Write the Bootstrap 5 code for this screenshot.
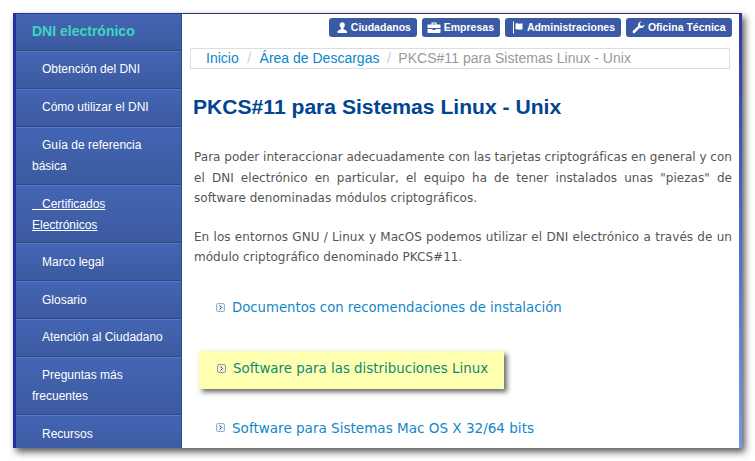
<!DOCTYPE html>
<html lang="es"><head><meta charset="utf-8">
<link href="https://cdn.jsdelivr.net/npm/bootstrap@5.3.0/dist/css/bootstrap.min.css" rel="stylesheet">
<style>
html,body{height:461px;overflow:hidden;background:#fff}
body{font-family:"Liberation Sans",Arial,sans-serif}
.frame{margin:13px 0 0 13px;width:729px;height:435px;background:#fff;box-shadow:3px 4px 7px rgba(0,0,0,.65);border-top:1px solid #2a3580;overflow:hidden}
.edge{width:3px;background:#2131a0;flex:none}
.edge-r{width:3px;background:linear-gradient(#2d3b9e,#6f9bea);flex:none}
.side{width:166px;flex:none;border-right:1px solid #2f4c8f;overflow:hidden;background:#3f5fa8}
.side a{display:block;color:#fff;font-size:12px;line-height:21px;text-decoration:none;padding:7px 5px 8px 16px;text-indent:10px;background:linear-gradient(#4465b4,#3b5a9f);border-top:1px solid #5a78bd;border-bottom:1px solid #2e4a86}
.side a.two{padding-bottom:7px}
.side a.head{color:#3fd6c0;font-weight:700;font-size:14px;text-indent:0;padding:7px 5px 0 16px;height:37px;border-top:0}
.side a.u{text-decoration:underline;text-indent:0;padding-top:8px;padding-bottom:6px}
.side a.drop{padding-top:8px;padding-bottom:7px}
.main{min-width:0;flex:1 1 auto;padding:4px 7px 0 8px}
.tops{gap:4.400px;justify-content:flex-end}
.tbtn{display:inline-flex;align-items:center;gap:3px;height:19px;padding:0 6.500px 0 5px;background:#3b5aa5;color:#fff;font-size:10.500px;font-weight:700;border-radius:3px;white-space:nowrap;line-height:1;text-decoration:none}
.crumbs{margin:11px 2.500px 0 0;height:21px;border:1px solid #ddd;padding:0 0 0 15px;font-size:14px;color:#999;line-height:19px;white-space:nowrap}
.crumbs a{color:#0b86c8;text-decoration:none}
.crumbs i{font-style:normal;color:#ccc;margin:0 8.500px}
.crumbs i.near{margin:0 7.500px}
.crumbs span{letter-spacing:.03px}
.ttl{font-size:21.100px;line-height:24px;font-weight:700;color:#004494;margin:26px 0 0 3px}
.para{font-family:"DejaVu Sans",sans-serif;font-size:12px;letter-spacing:.04px;line-height:20.500px;color:#555;text-align:justify;margin:0 0 0 4px}
.jl{display:block;text-align-last:justify}
.tight{word-spacing:-.5px}
.p1{margin-top:28px}
.p2{margin-top:18px}
.linkrow{font-family:"DejaVu Sans",sans-serif;color:#1287c7;display:flex;align-items:center;gap:7px;text-decoration:none;line-height:20px;white-space:nowrap}
.l1{margin:30px 0 0 26px;font-size:13.250px}
.l2{margin:33px 0 0 9px;width:305px;height:38px;padding:0 0 2px 18px;font-size:13.400px}
.l3{margin:29px 0 0 26px;font-size:13.550px}
.hot{background:#ffffb0;color:#0b8a78;box-shadow:3px 3px 5px rgba(0,0,0,.6)}
</style></head>
<body>
<div class="frame d-flex">
<div class="edge"></div>
<nav class="side">
<a class="head" href="#">DNI electrónico</a>
<a href="#">Obtención del DNI</a>
<a href="#">Cómo utilizar el DNI</a>
<a class="two" href="#">Guía de referencia básica</a>
<a class="two u" href="#">&nbsp;&nbsp;&nbsp;Certificados<br>Electrónicos</a>
<a class="drop" href="#">Marco legal</a>
<a class="drop" href="#">Glosario</a>
<a href="#">Atención al Ciudadano</a>
<a class="two" href="#">Preguntas más frecuentes</a>
<a class="drop" href="#">Recursos</a>
</nav>
<main class="main">
<div class="d-flex tops">
<a class="tbtn" href="#"><svg width="14" height="13" viewBox="0 0 14 13" fill="#fff"><path d="M8.500 1.200c1.300 0 2.300 1 2.300 2.700 0 1.300-.6 2.400-1.300 3.100v1.300c1.600.6 3.200 1.300 3.500 2.200v1.500H3.500V10.500c.3-.9 1.900-1.600 3.500-2.200V7c-.7-.7-1.300-1.800-1.300-3.100 0-1.700 1-2.700 2.800-2.700z"/></svg>Ciudadanos</a>
<a class="tbtn" href="#"><svg width="14" height="13" viewBox="0 0 14 13" fill="#fff"><path d="M4.500 1.500h5V3.500h3c.6 0 1 .4 1 1V7h-13V4.500c0-.6.4-1 1-1h3zM5.700 2.500v1h2.600v-1zM.5 8h5v1h3V8h5v3c0 .6-.4 1-1 1h-11c-.6 0-1-.4-1-1z"/></svg>Empresas</a>
<a class="tbtn" href="#"><svg width="14" height="13" viewBox="0 0 14 13" fill="#fff"><path d="M3 .5h1v12H3zM5.500 2.500c2-.8 3.500.9 7-.2v6c-3.500 1.100-5-.6-7 .2z"/></svg>Administraciones</a>
<a class="tbtn" href="#"><svg width="14" height="13" viewBox="0 0 14 13" fill="#fff"><path d="M13.500 3.500a3.500 3.500 0 0 1-4.700 3.300L4 11.800a1.400 1.400 0 0 1-2-2l5.200-4.800A3.500 3.500 0 0 1 10.500.5L8.800 2.500l.6 2 2 .6z"/></svg>Oficina Técnica</a>
</div>
<div class="d-flex crumbs"><a href="#">Inicio</a><i>/</i><a href="#">Área de Descargas</a><i class="near">/</i><span>PKCS#11 para Sistemas Linux - Unix</span></div>
<h1 class="ttl">PKCS#11 para Sistemas Linux - Unix</h1>
<p class="para p1"><span class="jl tight">Para poder interaccionar adecuadamente con las tarjetas criptográficas en general y con</span><span class="jl">el DNI electrónico en particular, el equipo ha de tener instalados unas "piezas" de</span>software denominadas módulos criptográficos.</p>
<p class="para p2">En los entornos GNU / Linux y MacOS podemos utilizar el DNI electrónico a través de un módulo criptográfico denominado PKCS#11.</p>
<a class="linkrow l1" href="#"><svg width="9" height="9" viewBox="0 0 9 9"><rect x=".5" y=".5" width="8" height="8" rx="1.500" fill="#eef3fa" stroke="#8db0d8"/><path d="M3.500 2.500 5.500 4.500 3.500 6.500" fill="none" stroke="#333"/></svg>Documentos con recomendaciones de instalación</a>
<a class="linkrow hot l2" href="#"><svg width="9" height="9" viewBox="0 0 9 9"><rect x=".5" y=".5" width="8" height="8" rx="1.500" fill="#f4f4d0" stroke="#999"/><path d="M3.500 2.500 5.500 4.500 3.500 6.500" fill="none" stroke="#333"/></svg>Software para las distribuciones Linux</a>
<a class="linkrow l3" href="#"><svg width="9" height="9" viewBox="0 0 9 9"><rect x=".5" y=".5" width="8" height="8" rx="1.500" fill="#eef3fa" stroke="#8db0d8"/><path d="M3.500 2.500 5.500 4.500 3.500 6.500" fill="none" stroke="#333"/></svg>Software para Sistemas Mac OS X 32/64 bits</a>
</main>
<div class="edge-r"></div>
</div>
<script src="https://cdn.jsdelivr.net/npm/bootstrap@5.3.0/dist/js/bootstrap.bundle.min.js"></script>
</body></html>
